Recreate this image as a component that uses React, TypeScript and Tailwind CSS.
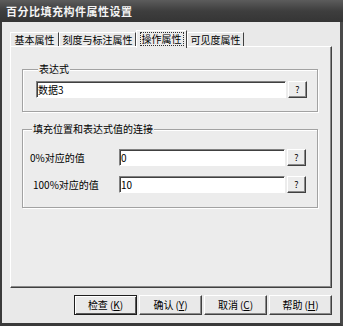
const font = { fontFamily: '"Noto Sans CJK SC", "Liberation Sans", sans-serif' };

const tabs = [
  { name: "基本属性", w: "w-[49px]" },
  { name: "刻度与标注属性", w: "w-[77px]" },
  { name: "操作属性", w: "w-[51px]", active: true },
  { name: "可见度属性", w: "w-[57px]" },
];

const buttons = [
  { label: "检查", key: "K", isDefault: true },
  { label: "确认", key: "Y" },
  { label: "取消", key: "C" },
  { label: "帮助", key: "H" },
];

const Field = ({ value, className }: { value: string; className: string }) => (
  <div
    className={`flex h-[17px] items-center border-t border-l border-b border-r border-t-[#808080] border-l-[#808080] border-b-white border-r-white bg-white pl-[1px] text-[10px] leading-none text-black shadow-[inset_1px_1px_0_#404040] ${className}`}
  >
    {value}
  </div>
);

const QButton = () => (
  <div className="ml-[2px] flex h-[17px] w-[19px] items-center justify-center border border-t-white border-l-white border-b-[#404040] border-r-[#404040] bg-[#ececec] text-[9px] leading-none text-black shadow-[inset_-1px_-1px_0_#8a8a8a]">
    ?
  </div>
);

const Group = ({
  title,
  className,
  children,
}: {
  title: string;
  className: string;
  children: React.ReactNode;
}) => (
  <fieldset
    className={`mx-[0px] border border-[#a2a2a2] shadow-[inset_1px_1px_0_#ffffff,1px_1px_0_#ffffff] ${className}`}
  >
    <legend className="ml-[2px] bg-[#ececec] px-[1px] text-[10px] leading-[12px] text-black">
      {title}
    </legend>
    {children}
  </fieldset>
);

export default function App() {
  return (
    <div className="flex h-[326px] w-[343px] flex-col overflow-hidden bg-[#e9e9e9]" style={font}>
      <div className="flex h-[22px] items-center bg-gradient-to-b from-[#5c5c5c] via-[#3e3e3e] to-[#353535] pl-[6px] text-[11px] font-bold tracking-[0.5px] text-[#f4f4f4]">
        百分比填充构件属性设置
      </div>
      <div className="flex flex-1 flex-col border-r-[3px] border-b-[3px] border-l-2 border-r-[#4a4a4a] border-b-[#3a3a3a] border-l-[#3a3a3a] pt-[8px]">
        <div className="ml-[8px] flex h-[16px] items-end">
          {tabs.map((t) =>
            t.active ? (
              <div
                key={t.name}
                className={`relative z-10 -mb-[2px] flex h-[18px] ${t.w} items-start justify-center border-t border-l border-r border-t-white border-l-white border-r-[#404040] bg-[#ececec] pt-[1px]`}
              >
                <span className="border border-dotted border-[#303030] px-[1px] text-[10px] leading-[12px] text-black">
                  {t.name}
                </span>
              </div>
            ) : (
              <div
                key={t.name}
                className={`flex h-[14px] ${t.w} items-center justify-center border-t border-l border-r border-t-white border-l-white border-r-[#404040] text-[10px] leading-none text-black`}
              >
                {t.name}
              </div>
            )
          )}
        </div>
        <div className="mx-[8px] flex h-[242px] flex-col border border-t-white border-l-white border-b-[#404040] border-r-[#404040] bg-[#ececec] pt-[16px] pr-[13px] pl-[11px] shadow-[inset_-1px_-1px_0_#8a8a8a]">
          <Group title="表达式" className="h-[49px] pt-[6px] pl-[13px]">
            <div className="flex">
              <Field value="数据3" className="w-[250px]" />
              <QButton />
            </div>
          </Group>
          <Group title="填充位置和表达式值的连接" className="mt-[11px] h-[85px] pt-[14px] pl-[7px]">
            <div className="flex flex-col gap-[10px]">
              <div className="flex items-center">
                <span className="w-[89px] text-[10px] leading-none text-black">0%对应的值</span>
                <Field value="0" className="w-[166px]" />
                <QButton />
              </div>
              <div className="flex items-center">
                <span className="w-[89px] pl-[3px] text-[10px] leading-none text-black">100%对应的值</span>
                <Field value="10" className="w-[166px]" />
                <QButton />
              </div>
            </div>
          </Group>
        </div>
        <div className="mt-[7px] mr-[8px] flex justify-end gap-[2px]">
          {buttons.map((b) => (
            <div
              key={b.label}
              className={`flex h-[20px] w-[63px] items-center justify-center text-[10px] leading-none text-black ${
                b.isDefault
                  ? "border border-[#1e1e1e] shadow-[inset_1px_1px_0_#ffffff,inset_-1px_-1px_0_#5a5a5a]"
                  : "border border-t-white border-l-white border-b-[#404040] border-r-[#404040] shadow-[inset_-1px_-1px_0_#8a8a8a]"
              }`}
            >
              {b.label}
              <span className="ml-[2px]">
                (<span className="underline">{b.key}</span>)
              </span>
            </div>
          ))}
        </div>
      </div>
    </div>
  );
}
